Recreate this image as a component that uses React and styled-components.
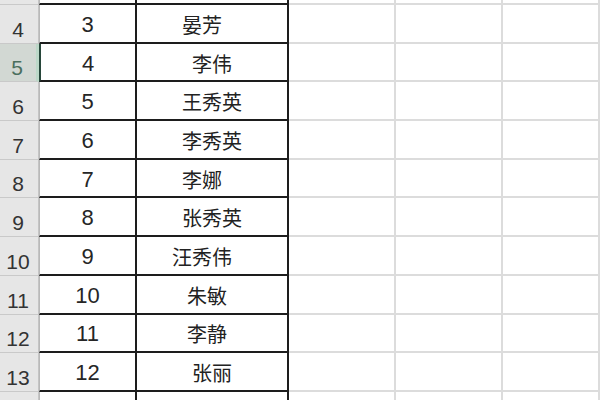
import React from "react";
import styled, { createGlobalStyle } from "styled-components";

const GlobalStyle = createGlobalStyle`
  html, body {
    margin: 0;
    padding: 0;
    background: #ffffff;
  }
  body {
    width: 600px;
    height: 400px;
    overflow: hidden;
  }
`;

// rows 3..14, only 4..13 fully visible
const rows = [
  { n: 3, label: "3", num: "", name: "", shift: 0 },
  { n: 4, label: "4", num: "3", name: "晏芳", shift: -10 },
  { n: 5, label: "5", num: "4", name: "李伟", shift: 0, selected: true },
  { n: 6, label: "6", num: "5", name: "王秀英", shift: 0 },
  { n: 7, label: "7", num: "6", name: "李秀英", shift: 0 },
  { n: 8, label: "8", num: "7", name: "李娜", shift: -10 },
  { n: 9, label: "9", num: "8", name: "张秀英", shift: 0 },
  { n: 10, label: "10", num: "9", name: "汪秀伟", shift: -10 },
  { n: 11, label: "11", num: "10", name: "朱敏", shift: -5 },
  { n: 12, label: "12", num: "11", name: "李静", shift: -5 },
  { n: 13, label: "13", num: "12", name: "张丽", shift: 0 },
  { n: 14, label: "", num: "", name: "", shift: 0 },
];

const Sheet = styled.div`
  width: 600px;
  height: 400px;
  overflow: hidden;
  background: #ffffff;
`;

const Rows = styled.div`
  margin-top: -33.7px;
`;

const Row = styled.div`
  display: grid;
  grid-template-columns: 39px 98px 152px 107px 107px 1fr;
  height: 38.7px;
`;

const RowHead = styled.div`
  box-sizing: border-box;
  height: 100%;
  display: flex;
  align-items: flex-end;
  justify-content: center;
  padding: 0 2px 3px 0;
  background: ${(p) => (p.$selected ? "#d2d8d3" : "#e6e6e6")};
  border-right: ${(p) => (p.$selected ? "3px solid #bcd8c8" : "1px solid #c4c4c4")};
  border-bottom: 1px solid #c9c9c9;
  font-family: "Liberation Sans", Arial, sans-serif;
  font-size: 21px;
  line-height: 1;
  color: ${(p) => (p.$selected ? "#4b6f5e" : "#333333")};
`;

const NumCell = styled.div`
  box-sizing: border-box;
  height: 100%;
  display: flex;
  align-items: center;
  justify-content: center;
  padding-top: 3px;
  border-left: ${(p) => (p.$selected ? "2px solid #27463a" : "1px solid #b9b9b9")};
  border-right: 2px solid #1d1d1d;
  border-bottom: 2px solid #1d1d1d;
  font-family: "Liberation Sans", Arial, sans-serif;
  font-size: 22px;
  color: #262626;
`;

const NameCell = styled.div`
  box-sizing: border-box;
  height: 100%;
  display: flex;
  align-items: center;
  justify-content: center;
  padding-top: 3px;
  border-right: 2px solid #1d1d1d;
  border-bottom: 2px solid #1d1d1d;
  font-family: "Noto Sans CJK SC", "Liberation Sans", sans-serif;
  font-size: 20px;
  color: #222222;
`;

const NameText = styled.span`
  margin-right: ${(p) => -2 * p.$shift}px;
  line-height: 1;
`;

const GridCell = styled.div`
  box-sizing: border-box;
  height: 100%;
  border-right: 2px solid #dcdcdc;
  border-bottom: 2px solid #dcdcdc;
`;

export default function App() {
  return (
    <>
      <GlobalStyle />
      <Sheet>
        <Rows>
          {rows.map((r) => (
            <Row key={r.n}>
              <RowHead $selected={r.selected}>{r.label}</RowHead>
              <NumCell $selected={r.selected}>{r.num}</NumCell>
              <NameCell>
                <NameText $shift={r.shift}>{r.name}</NameText>
              </NameCell>
              <GridCell />
              <GridCell />
              <GridCell />
            </Row>
          ))}
        </Rows>
      </Sheet>
    </>
  );
}
